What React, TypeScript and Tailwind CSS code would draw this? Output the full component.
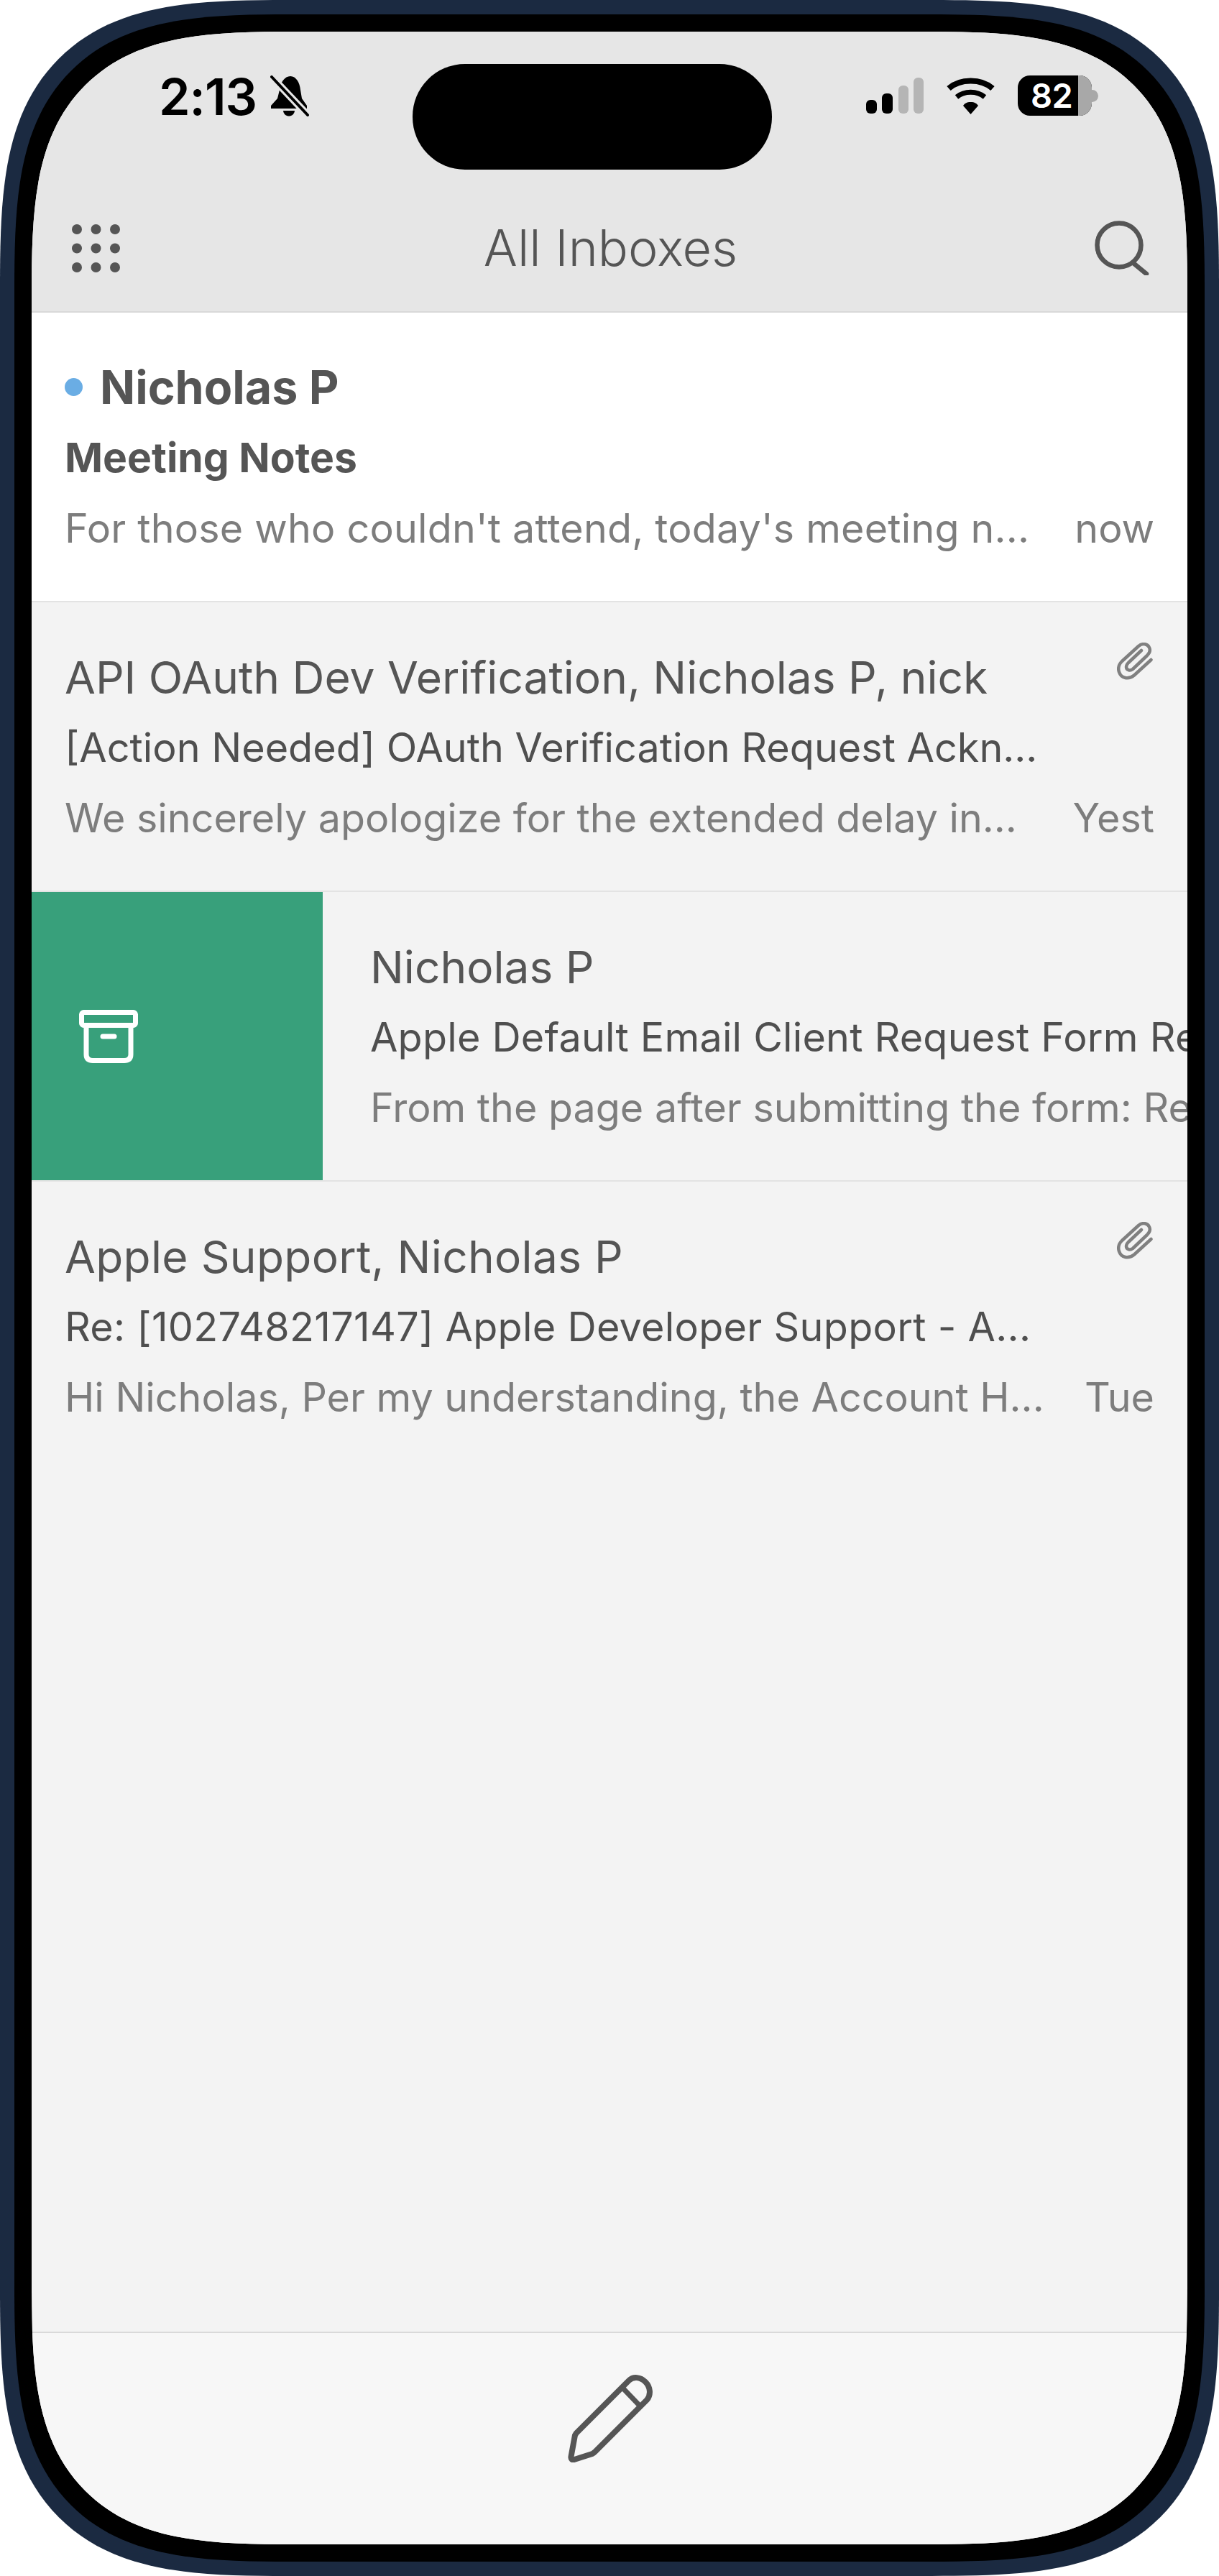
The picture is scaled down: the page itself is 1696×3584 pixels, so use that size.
function Grid() {
  return (
    <svg width="67" height="67" viewBox="0 0 67 67" fill="#555">
      {[7, 33.500, 60].map((y) => [7, 33.500, 60].map((x) => <circle key={`${x}-${y}`} cx={x} cy={y} r="7" />))}
    </svg>
  );
}

function Clip() {
  return (
    <svg width="50" height="52" viewBox="0 0 50 52" fill="none" stroke="#808080" strokeWidth="4.500" strokeLinecap="round" strokeLinejoin="round" className="mr-[2px]">
      <path d="M47.500 24 L24 45.500 C16 52 6 50 3 41 C1 35 3 30 7 26 L30 5 C36 0 43 2 45 7 C47 11 45 15 42 18 L22 37 C18 40 13 38 13 34 C13 32 14 30 16 28 L34 11" />
    </svg>
  );
}

type RowProps = {
  sender: string;
  subject: string;
  preview: string;
  time: string;
  senderClass?: string;
  subjectClass?: string;
  last?: boolean;
};

function Row({ sender, subject, preview, time, senderClass = "", subjectClass = "", last }: RowProps) {
  return (
    <div className={`h-[403px] shrink-0 pl-[46px] pr-[46px] pt-[56px] flex flex-col ${last ? "" : "border-b-2 border-[#e3e3e3]"}`}>
      <div className="flex justify-between items-start h-[97px]">
        <span className={`text-[62.200px] leading-[97px] text-[#555] whitespace-nowrap ${senderClass}`}>{sender}</span>
        <Clip />
      </div>
      <div className={`h-[97px] text-[55.700px] leading-[97px] text-[#4f4f4f] whitespace-nowrap ${subjectClass}`}>{subject}</div>
      <div className="flex justify-between h-[97px] pt-[1px] text-[55.600px] leading-[97px] text-[#7d7d7d]">
        <span className="whitespace-nowrap">{preview}</span>
        <span className="whitespace-nowrap">{time}</span>
      </div>
    </div>
  );
}

export default function App() {
  return (
    <div className="w-[1696px] h-[3584px] bg-white font-['Inter',sans-serif]">
      <div className="w-full h-full bg-[#1b2a41] rounded-[400px] [corner-shape:superellipse(1.6)] p-5">
        <div className="w-full h-full bg-black rounded-[385px] [corner-shape:superellipse(1.6)] p-6">
          <div className="relative w-full h-full rounded-[365px] [corner-shape:superellipse(1.6)] overflow-hidden flex flex-col bg-[#f3f3f3]">
            <div className="absolute left-[530px] top-[45px] w-[500px] h-[147px] rounded-[73px] bg-black" />
            <header className="h-[391px] shrink-0 bg-[#e6e6e6] border-b-2 border-[#d9d9d9] flex flex-col">
              <div className="h-[240px] flex justify-between pl-[177px] pr-[124px] pt-[61px]">
                <div className="flex items-start gap-[19px]">
                  <span className="font-semibold text-[70px] leading-[60px] tracking-[-1px] text-black">2:13</span>
                  <svg width="54" height="57" viewBox="0 0 54 57" fill="#000">
                    <path d="M28 1 C36 1 41 10 42 20 L44 32 L51 42 L51 46 L1 46 L1 42 L10 32 L13 20 C14 10 20 1 28 1 Z" />
                    <path d="M18 49 H34 C33 59 19 59 18 49 Z" />
                    <path d="M1 1 L52 55" stroke="#e6e6e6" strokeWidth="10" />
                    <path d="M2 2 L52 55" stroke="#000" strokeWidth="4" strokeLinecap="round" />
                  </svg>
                </div>
                <div className="flex items-start">
                  <svg width="80" height="51" viewBox="0 0 80 51" className="mt-[3px]">
                    <rect x="0" y="31" width="15" height="19" rx="6" fill="#000" />
                    <rect x="22" y="22" width="15" height="28" rx="6" fill="#000" />
                    <rect x="45" y="11" width="14" height="39" rx="6" fill="#b5b5b5" />
                    <rect x="66" y="0" width="14" height="50" rx="6" fill="#b5b5b5" />
                  </svg>
                  <svg width="69" height="51" viewBox="0 0 69 51" className="mt-[3px] ml-[31px]" fill="none" stroke="#000">
                    <path d="M4 15 C20 1 49 1 65 15" strokeWidth="8" />
                    <path d="M15 27 C26 18 43 18 54 27" strokeWidth="7" />
                    <path d="M34.500 34 C29 34 26 36 24 39 L34.500 51 L45 39 C43 36 40 34 34.500 34 Z" fill="#000" stroke="none" />
                  </svg>
                  <div className="ml-[31px] w-[103px] h-[56px] rounded-[17px] bg-black overflow-hidden relative">
                    <span className="absolute left-[18px] top-[5px] font-semibold text-[47px] leading-[46px] tracking-[-0.500px] text-white">82</span>
                    <div className="absolute right-0 top-0 bottom-0 w-[19px] bg-[#a8a8a8]" />
                  </div>
                  <div className="mt-[20px] w-[9px] h-[17px] rounded-r-full bg-[#a8a8a8]" />
                </div>
              </div>
              <div className="h-[122px] grid grid-cols-[1fr_auto_1fr] items-center pl-[56px] pr-[53px]">
                <div className="justify-self-start"><Grid /></div>
                <span className="font-light text-[70px] leading-none text-[#555]">All Inboxes</span>
                <svg width="76" height="76" viewBox="0 0 76 76" fill="none" stroke="#555" strokeWidth="6.500" strokeLinecap="round" className="justify-self-end">
                  <circle cx="34" cy="34" r="30.500" />
                  <path d="M55 60 L72 74" />
                </svg>
              </div>
            </header>
            <div className="h-[403px] shrink-0 bg-white border-b-2 border-[#e3e3e3] pl-[46px] pr-[46px] pt-[56px] flex flex-col">
              <div className="flex items-center h-[97px] gap-[24px]">
                <span className="w-[25px] h-[25px] rounded-full bg-[#6aade4] -mt-[3px]" />
                <span className="text-[64.500px] leading-[97px] font-bold text-[#555]">Nicholas P</span>
              </div>
              <div className="h-[97px] text-[57px] leading-[97px] font-bold text-[#555]">Meeting Notes</div>
              <div className="flex justify-between h-[97px] pt-[1px] text-[55.600px] leading-[97px] text-[#7d7d7d]">
                <span className="whitespace-nowrap tracking-[0.200px]">For those who couldn't attend, today's meeting n...</span>
                <span>now</span>
              </div>
            </div>
            <Row sender="API OAuth Dev Verification, Nicholas P, nick" subject="[Action Needed] OAuth Verification Request Ackn..." preview="We sincerely apologize for the extended delay in..." time="Yest" />
            <div className="h-[403px] shrink-0 border-b-2 border-[#e3e3e3] flex overflow-hidden">
              <div className="w-[405px] shrink-0 bg-[#38a07b] flex items-center pl-[66px]">
                <svg width="82" height="74" viewBox="0 0 82 74" fill="none" stroke="#fff" strokeWidth="7" strokeLinejoin="round" strokeLinecap="round">
                  <rect x="3.500" y="3.500" width="75" height="18" rx="3" />
                  <path d="M10 22 V62 Q10 70.500 19 70.500 H63 Q72 70.500 72 62 V22" />
                  <path d="M33 37 H49" />
                </svg>
              </div>
              <div className="pl-[66px] pt-[56px] whitespace-nowrap flex flex-col">
                <div className="text-[62.200px] leading-[97px] text-[#555]">Nicholas P</div>
                <div className="text-[55.700px] leading-[97px] tracking-[0.200px] text-[#4f4f4f]">Apple Default Email Client Request Form Re</div>
                <div className="pt-[1px] text-[55.600px] leading-[97px] text-[#7d7d7d]">From the page after submitting the form: Re</div>
              </div>
            </div>
            <Row sender="Apple Support, Nicholas P" senderClass="tracking-[0.300px]" subject="Re: [102748217147] Apple Developer Support - A..." subjectClass="tracking-[0.280px]" preview="Hi Nicholas, Per my understanding, the Account H..." time="Tue" last />
            <div className="flex-1" />
            <footer className="h-[296px] shrink-0 bg-[#f7f7f7] border-t-2 border-[#d9d9d9] flex justify-center pt-[58px] pl-[2px]">
              <svg width="118" height="122" viewBox="0 0 118 122" fill="none" stroke="#555" strokeWidth="8" strokeLinejoin="round" className="shrink-0">
                <path d="M85 8 C91 2 101 3 108 10 C115 17 116 28 110 35 L38 107 C37 108 36 109 34 110 L9 118 C6 119 4 117 4.500 114 L10 84 C11 83 11 82 12 81 Z" />
                <path d="M76 18 L99 42" strokeWidth="7" />
              </svg>
            </footer>
          </div>
        </div>
      </div>
    </div>
  );
}
